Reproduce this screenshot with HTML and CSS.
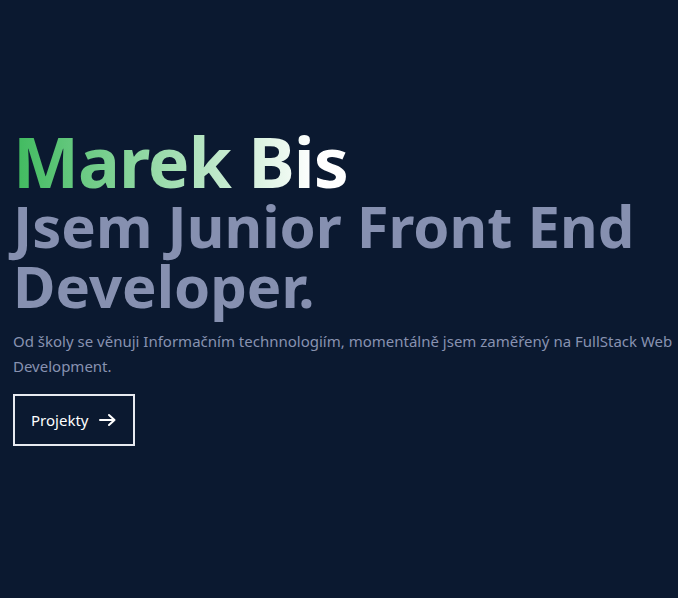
FILE: index.html
```html
<!DOCTYPE html>
<html lang="cs">
<head>
<meta charset="utf-8">
<title>Marek Bis</title>
<link rel="stylesheet" href="styles.css">
</head>
<body>
<main class="hero">
  <h1 class="name">Marek Bis</h1>
  <h2 class="role">Jsem Junior Front End Developer.</h2>
  <p class="intro">Od školy se věnuji Informačním technnologiím, momentálně jsem zaměřený na FullStack Web Development.</p>
  <a class="btn" href="#projekty">Projekty
    <svg class="arrow" width="17" height="14" viewBox="0 0 17 14" aria-hidden="true"><path d="M1 7h14.5M10 2l5.5 5-5.5 5" fill="none" stroke="currentColor" stroke-width="2" stroke-linecap="round" stroke-linejoin="round"/></svg>
  </a>
</main>
</body>
</html>
```
FILE: styles.css
```css
html, body {
  margin: 0;
  padding: 0;
  background: #0b1930;
}
body {
  font-family: "Noto Sans", "Open Sans", sans-serif;
  color: #8892b0;
}
.hero {
  box-sizing: border-box;
  min-height: 598px;
  padding: 129px 4px 0 13px;
  display: flex;
  flex-direction: column;
  align-items: flex-start;
}
.name {
  margin: 0;
  font-size: 70px;
  line-height: 64px;
  font-weight: 700;
  letter-spacing: -1px;
  background: linear-gradient(90deg, #3fba5e 0%, #a7e0b6 50%, #ffffff 90%);
  -webkit-background-clip: text;
  background-clip: text;
  color: transparent;
}
.role {
  margin: 3px 0 0;
  font-size: 58px;
  line-height: 60px;
  font-weight: 700;
  color: #8690b0;
}
.intro {
  margin: 13px 0 15px;
  font-size: 15px;
  line-height: 25px;
}
.btn {
  display: inline-flex;
  align-items: center;
  gap: 11px;
  padding: 0 17px 0 16px;
  height: 52px;
  box-sizing: border-box;
  border: 2px solid #e8eaf0;
  color: #ffffff;
  text-decoration: none;
  font-size: 15px;
}
.arrow {
  display: block;
}
```
